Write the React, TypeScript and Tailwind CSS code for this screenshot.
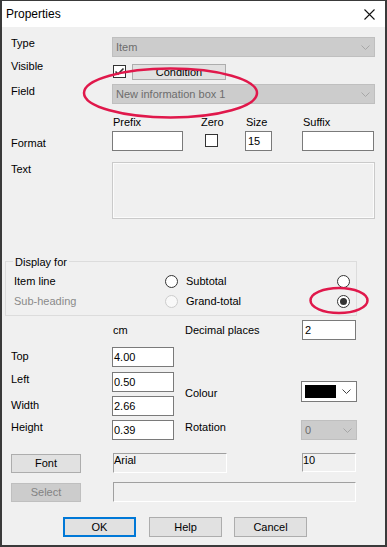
import React from "react";

function Chevron({ color }: { color: string }) {
  return (
    <svg width="9" height="5" viewBox="0 0 9 5" className="shrink-0">
      <path d="M0.5 0.5 L4.5 4.5 L8.5 0.5" fill="none" stroke={color} strokeWidth="1" />
    </svg>
  );
}

function Checkbox({ checked }: { checked?: boolean }) {
  return (
    <div className="w-[13px] h-[13px] border border-[#333333] bg-white flex items-center justify-center">
      {checked && (
        <svg width="11" height="11" viewBox="0 0 11 11">
          <path d="M1.5 5.5 L4 8 L9.5 2.5" fill="none" stroke="#333333" strokeWidth="1.6" />
        </svg>
      )}
    </div>
  );
}

function Radio({ checked, disabled }: { checked?: boolean; disabled?: boolean }) {
  return (
    <div
      className={
        disabled
          ? "w-[13px] h-[13px] shrink-0 rounded-full border border-[#cccccc] bg-[#f8f8f8]"
          : "w-[13px] h-[13px] shrink-0 rounded-full border border-[#333333] bg-white flex items-center justify-center"
      }
    >
      {checked && <div className="w-[7px] h-[7px] rounded-full bg-[#333333]" />}
    </div>
  );
}

function DisabledCombo({ text, w }: { text: string; w: string }) {
  return (
    <div className={`${w} h-[20px] bg-[#cccccc] border border-[#bfbfbf] flex items-center justify-between pl-[3px] pr-[4px] text-[#6d6d6d]`}>
      <span>{text}</span>
      <Chevron color="#a6a6a6" />
    </div>
  );
}

export default function App() {
  return (
    <div className="relative w-[387px] h-[547px] font-['Liberation_Sans',Arial,sans-serif] text-[11px] leading-[13px] text-black">
      <div className="w-full h-full bg-[#f0f0f0] border-t border-l-2 border-r-2 border-b-2 border-[#3a3a3a] flex flex-col">
        {/* Title bar */}
        <div className="h-[26px] shrink-0 bg-white flex items-center justify-between pl-[4px] pr-[10px]">
          <span className="text-[12px] leading-[14px]">Properties</span>
          <svg width="11" height="11" viewBox="0 0 11 11">
            <path d="M0.5 0.5 L10.5 10.5 M10.5 0.5 L0.5 10.5" stroke="#111111" strokeWidth="1.1" />
          </svg>
        </div>

        {/* Type */}
        <div className="mt-[10px] ml-[9px] flex h-[20px]">
          <div className="w-[101px]">Type</div>
          <DisabledCombo text="Item" w="w-[263px]" />
        </div>

        {/* Visible */}
        <div className="mt-[3px] ml-[9px] flex h-[20px]">
          <div className="w-[101px]">Visible</div>
          <div className="ml-[1px] mt-[5px]">
            <Checkbox checked />
          </div>
          <div className="ml-[6px] mt-[4px] w-[94px] h-[16px] bg-[#e1e1e1] border border-[#adadad] flex items-center justify-center">
            Condition
          </div>
        </div>

        {/* Field */}
        <div className="mt-[4px] ml-[9px] flex h-[20px]">
          <div className="w-[101px] pt-[1px]">Field</div>
          <DisabledCombo text="New information box 1" w="w-[263px]" />
        </div>

        {/* Format */}
        <div className="mt-[12px] ml-[9px] flex">
          <div className="w-[101px] pt-[21px]">Format</div>
          <div className="flex">
            <div className="w-[71px] flex flex-col">
              <div className="pl-[1px] h-[13px]">Prefix</div>
              <div className="mt-[2px] w-[71px] h-[20px] bg-white border border-[#7a7a7a]" />
            </div>
            <div className="ml-[18px] w-[26px] flex flex-col">
              <div className="h-[13px]">Zero</div>
              <div className="mt-[5px] ml-[4px]">
                <Checkbox />
              </div>
            </div>
            <div className="ml-[18px] w-[27px] flex flex-col">
              <div className="h-[13px] pl-[1px]">Size</div>
              <div className="mt-[2px] w-[27px] h-[20px] bg-white border border-[#7a7a7a] flex items-center pl-[2px]">15</div>
            </div>
            <div className="ml-[30px] w-[72px] flex flex-col">
              <div className="h-[13px] pl-[1px]">Suffix</div>
              <div className="mt-[2px] w-[72px] h-[20px] bg-white border border-[#7a7a7a]" />
            </div>
          </div>
        </div>

        {/* Text */}
        <div className="mt-[11px] ml-[9px] flex">
          <div className="w-[101px] pt-[1px]">Text</div>
          <div className="w-[263px] h-[57px] bg-[#f0f0f0] border border-[#cacaca] shadow-[inset_0_0_0_1px_#fbfbfb]" />
        </div>

        {/* Display for group */}
        <div className="mt-[42px] ml-[3px] w-[352px] border border-[#dcdcdc] pb-[7px] flex flex-col">
          <div className="-mt-[6px] h-[13px] flex">
            <span className="ml-[7px] px-[2px] bg-[#f0f0f0]">Display for</span>
          </div>
          <div className="mt-[6px] h-[13px] pl-[8px] flex items-center">
            <div className="w-[151px]">Item line</div>
            <Radio />
            <div className="ml-[8px] w-[151px]">Subtotal</div>
            <Radio />
          </div>
          <div className="mt-[7px] h-[13px] pl-[8px] flex items-center">
            <div className="w-[151px] text-[#8a8a8a]">Sub-heading</div>
            <Radio disabled />
            <div className="ml-[8px] w-[151px]">Grand-total</div>
            <Radio checked />
          </div>
        </div>

        {/* Units / decimals */}
        <div className="mt-[4px] ml-[9px] flex h-[20px]">
          <div className="w-[101px]" />
          <div className="w-[73px] pt-[4px] pl-[1px]">cm</div>
          <div className="w-[117px] pt-[4px]">Decimal places</div>
          <div className="w-[54px] h-[20px] bg-white border border-[#7a7a7a] flex items-center pl-[2px]">2</div>
        </div>

        {/* Position + colour */}
        <div className="mt-[7px] ml-[9px] flex">
          <div className="flex flex-col">
            <div className="flex h-[20px]">
              <div className="w-[101px] pt-[3px]">Top</div>
              <div className="w-[62px] h-[20px] bg-white border border-[#7a7a7a] flex items-center pl-[1px]">4.00</div>
            </div>
            <div className="mt-[5px] flex h-[20px]">
              <div className="w-[101px] pt-[1px]">Left</div>
              <div className="w-[62px] h-[20px] bg-white border border-[#7a7a7a] flex items-center pl-[1px]">0.50</div>
            </div>
            <div className="mt-[4px] flex h-[20px]">
              <div className="w-[101px] pt-[3px]">Width</div>
              <div className="w-[62px] h-[20px] bg-white border border-[#7a7a7a] flex items-center pl-[1px]">2.66</div>
            </div>
            <div className="mt-[4px] flex h-[20px]">
              <div className="w-[101px] pt-[1px]">Height</div>
              <div className="w-[62px] h-[20px] bg-white border border-[#7a7a7a] flex items-center pl-[1px]">0.39</div>
            </div>
          </div>
          <div className="ml-[11px] flex flex-col">
            <div className="mt-[34px] flex h-[21px]">
              <div className="w-[116px] pt-[6px]">Colour</div>
              <div className="w-[56px] h-[21px] bg-white border border-[#7a7a7a] flex items-center justify-between pl-[3px] pr-[5px]">
                <div className="w-[31px] h-[13px] bg-black" />
                <Chevron color="#444444" />
              </div>
            </div>
            <div className="mt-[18px] flex h-[20px]">
              <div className="w-[116px] pt-[1px]">Rotation</div>
              <DisabledCombo text="0" w="w-[56px]" />
            </div>
          </div>
        </div>

        {/* Font row */}
        <div className="mt-[13px] ml-[9px] flex">
          <div className="mt-[1px] w-[70px] h-[19px] bg-[#e1e1e1] border border-[#adadad] flex items-center justify-center">Font</div>
          <div className="ml-[32px] w-[114px] h-[20px] border border-t-[#a0a0a0] border-l-[#a0a0a0] border-b-white border-r-white">Arial</div>
          <div className="ml-[75px] w-[54px] h-[19px] border border-t-[#a0a0a0] border-l-[#a0a0a0] border-b-white border-r-white">10</div>
        </div>

        {/* Select row */}
        <div className="mt-[9px] ml-[9px] flex">
          <div className="mt-[1px] w-[70px] h-[19px] bg-[#cccccc] border border-[#bfbfbf] flex items-center justify-center text-[#838383]">Select</div>
          <div className="ml-[32px] w-[243px] h-[20px] border border-t-[#a0a0a0] border-l-[#a0a0a0] border-b-white border-r-white" />
        </div>

        {/* Buttons */}
        <div className="mt-[15px] ml-[61px] flex">
          <div className="w-[73px] h-[20px] bg-[#e1e1e1] border-2 border-[#0078d7] flex items-center justify-center">OK</div>
          <div className="ml-[13px] w-[73px] h-[20px] bg-[#e1e1e1] border border-[#adadad] flex items-center justify-center">Help</div>
          <div className="ml-[12px] w-[73px] h-[20px] bg-[#e1e1e1] border border-[#adadad] flex items-center justify-center">Cancel</div>
        </div>
      </div>

      {/* Annotation ellipses */}
      <svg className="absolute left-0 top-0 pointer-events-none" width="387" height="547" viewBox="0 0 387 547">
        <ellipse cx="170.5" cy="93" rx="86.5" ry="24.5" fill="none" stroke="#e0184b" strokeWidth="2.5" />
        <ellipse cx="339" cy="300.5" rx="28.5" ry="12.5" fill="none" stroke="#e0184b" strokeWidth="2.5" />
      </svg>
    </div>
  );
}
